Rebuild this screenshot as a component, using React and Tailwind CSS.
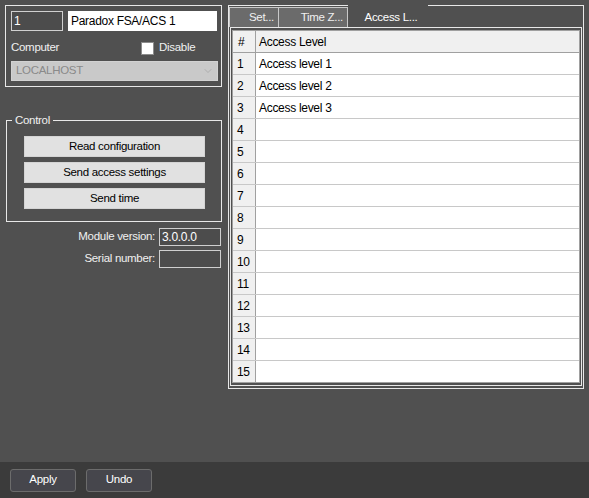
import React from "react";
import { ChevronDown } from "lucide-react";

const levels = ["Access level 1", "Access level 2", "Access level 3"];
const rows = Array.from({ length: 15 }, (_, i) => ({
  n: i + 1,
  name: levels[i] || "",
}));

const ControlButton = ({ children }) => (
  <button className="w-[181px] h-[21px] bg-[#e1e1e1] border border-[#d4d4d4] text-black flex items-center justify-center">
    {children}
  </button>
);

const BottomButton = ({ children }) => (
  <button className="w-[66px] h-[23px] bg-[#46464c] border border-[#6c6c6c] rounded-[3px] text-white flex items-center justify-center">
    {children}
  </button>
);

const App = () => {
  return (
    <div className="w-[589px] h-[498px] bg-[#505050] flex flex-col font-['Liberation_Sans',Arial,sans-serif] text-[11.5px] tracking-[-0.3px] leading-none text-[#f0f0f0]">
      <div className="flex-1 flex pt-[5px] pl-[5px]">
        {/* left column */}
        <div className="w-[217px] flex flex-col">
          <div className="border border-[#e8e8e8] pt-[5px] pl-[5px] pr-[3px] pb-[5px]">
            <div className="flex gap-[5px]">
              <div className="w-[52px] h-[20px] border border-[#d0d0d0] bg-[#4c4c4c] flex items-center pl-[2px] text-white text-[12px]">
                1
              </div>
              <div className="w-[149px] h-[20px] bg-white flex items-center pl-[3px] text-black text-[12px]">
                Paradox FSA/ACS 1
              </div>
            </div>
            <div className="mt-[6px] h-[22px] flex items-center">
              <span className="w-[130px]">Computer</span>
              <span className="w-[13px] h-[13px] bg-white border border-[#8c8c8c]" />
              <span className="ml-[5px]">Disable</span>
            </div>
            <div className="mt-[2px] w-[207px] h-[20px] bg-[#c9c9c9] border border-[#d2d2d2] flex items-center justify-between pl-[4px] pr-[3px] text-[#8a8a8a]">
              <span>LOCALHOST</span>
              <ChevronDown size={12} strokeWidth={1.2} color="#9c9c9c" />
            </div>
          </div>

          <div className="relative mt-[33px] ml-[1px] w-[216px] border border-[#e8e8e8] pt-[15px] pl-[17px] pb-[12px] flex flex-col gap-[5px]">
            <span className="absolute -top-[7px] left-[5px] px-[3px] bg-[#505050] leading-[13px]">
              Control
            </span>
            <ControlButton>Read configuration</ControlButton>
            <ControlButton>Send access settings</ControlButton>
            <ControlButton>Send time</ControlButton>
          </div>

          <div className="mt-[6px] flex items-center justify-end gap-[4px] pr-[1px]">
            <span>Module version:</span>
            <div className="w-[62px] h-[18px] border border-[#cfcfcf] bg-[#4c4c4c] flex items-center pl-[2px] text-white text-[12px]">
              3.0.0.0
            </div>
          </div>
          <div className="mt-[4px] flex items-center justify-end gap-[4px] pr-[1px]">
            <span>Serial number:</span>
            <div className="w-[62px] h-[18px] border border-[#cfcfcf] bg-[#4c4c4c]" />
          </div>
        </div>

        {/* right tab control */}
        <div className="ml-[6px] w-[356px] h-[384px] flex flex-col border-x border-b border-[#e8e8e8]">
          <div className="flex h-[22px]">
            <div className="w-[119px] border-t border-[#e8e8e8] pt-[1px] flex">
              <div className="w-[50px] h-[20px] bg-[#6b6b6b] border-x border-t border-[#c8c8c8] flex items-center justify-end pr-[4px]">
                Set...
              </div>
              <div className="w-[69px] h-[20px] bg-[#6b6b6b] border-r border-t border-[#c8c8c8] flex items-center justify-end pr-[4px]">
                Time Z...
              </div>
            </div>
            <div className="w-[80px] flex items-center justify-center pt-[3px] pl-[6px] text-white">
              Access L...
            </div>
            <div className="flex-1 border-t border-[#e8e8e8]" />
          </div>
          <div className="flex-1 mx-[1px] mb-[2px] border border-[#e8e8e8] px-[1px] py-[2px]">
            <div className="border border-[#a0a0a0] bg-white text-black text-[12px]">
              <div className="flex h-[22px] bg-[#f0f0f0] border-b border-[#a0a0a0]">
                <div className="w-[23px] border-r border-[#a0a0a0] flex items-center pl-[5px] pt-[1px]">#</div>
                <div className="flex-1 flex items-center pl-[3px] pt-[1px]">Access Level</div>
              </div>
              {rows.map((r) => (
                <div
                  key={r.n}
                  className="flex h-[22px] border-b border-[#c8c8c8] last:border-b-0 last:h-[21px]"
                >
                  <div className="w-[23px] bg-[#f0f0f0] border-r border-[#a0a0a0] flex items-center pl-[4px] pt-[1px]">
                    {r.n}
                  </div>
                  <div className="flex-1 flex items-center pl-[3px] pt-[1px]">{r.name}</div>
                </div>
              ))}
            </div>
          </div>
        </div>
      </div>

      <div className="h-[36px] bg-[#3b3b3b] flex items-center gap-[10px] pl-[10px]">
        <BottomButton>Apply</BottomButton>
        <BottomButton>Undo</BottomButton>
      </div>
    </div>
  );
};

export default App;
